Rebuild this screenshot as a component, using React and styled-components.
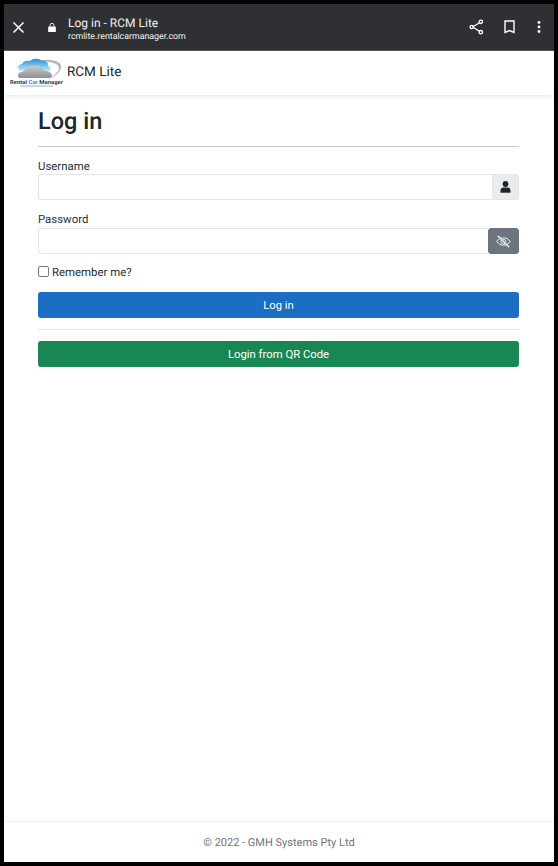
import React from 'react';
import styled, { createGlobalStyle } from 'styled-components';

const GlobalStyle = createGlobalStyle`
  html, body { margin: 0; padding: 0; background: #000; }
  * { box-sizing: border-box; }
  body {
    font-family: Roboto, "Liberation Sans", sans-serif;
    text-rendering: geometricPrecision;
  }
`;

const Frame = styled.div`
  width: 558px;
  height: 866px;
  background: #000;
  padding: 4px;
`;

const Screen = styled.div`
  height: 858px;
  background: #fff;
  display: flex;
  flex-direction: column;
`;

const BrowserBar = styled.div`
  height: 47px;
  flex: none;
  background: #2f3033;
  border-bottom: 1px solid #55565a;
  display: flex;
  align-items: center;
  color: #fff;
`;

const CloseSlot = styled.div`
  width: 29px;
  padding-left: 8px;
  display: flex;
`;

const LockSlot = styled.div`
  width: 35px;
  padding-left: 15px;
  display: flex;
`;

const TitleBlock = styled.div`
  flex: 1;
  display: flex;
  flex-direction: column;
  padding-top: 3px;
`;

const PageTitle = styled.div`
  font-size: 12px;
  line-height: 16px;
  color: #f1f1f2;
`;

const PageUrl = styled.div`
  font-size: 8.8px;
  line-height: 12px;
  color: #f4f4f5;
`;

const BarActions = styled.div`
  display: flex;
  align-items: center;
  gap: 20px;
  padding-right: 11px;
`;

const NavBar = styled.nav`
  height: 44px;
  flex: none;
  background: #fff;
  box-shadow: 0 1px 4px rgba(0, 0, 0, 0.1);
  display: flex;
  align-items: center;
  padding: 0 0 2px 6px;
  gap: 3px;
`;

const Brand = styled.div`
  font-size: 13.5px;
  color: #212529;
`;

const Main = styled.main`
  flex: 1;
  padding: 0 35px 0 34px;
`;

const Heading = styled.h1`
  margin: 11px 0 0;
  font-size: 23.5px;
  line-height: 30px;
  font-weight: 500;
  color: #212529;
`;

const Rule = styled.hr`
  margin: ${p => p.$gap || '10px 0 12px'};
  border: 0;
  border-top: 1px solid ${p => p.$color || '#c9cacc'};
`;

const Field = styled.div`
  margin-bottom: ${p => p.$gap || '9px'};
`;

const Label = styled.label`
  display: block;
  font-size: 11.4px;
  line-height: ${p => p.$tall ? '17px' : '15px'};
  color: #2b3035;
`;

const InputGroup = styled.div`
  display: flex;
  height: 26px;
`;

const Input = styled.input`
  flex: 1;
  min-width: 0;
  height: 100%;
  border: 1px solid #e3e5e8;
  border-right: 0;
  border-radius: 3px 0 0 3px;
  background: #fff;
  outline: none;
`;

const Addon = styled.div`
  width: ${p => p.$wide ? '31px' : '27px'};
  flex: none;
  display: flex;
  align-items: center;
  justify-content: center;
  background: ${p => p.$dark ? '#6c757d' : '#e9ecef'};
  border-radius: ${p => p.$dark ? '3px' : '0 3px 3px 0'};
  border: 1px solid ${p => p.$dark ? '#6c757d' : '#e3e5e8'};
`;

const RememberRow = styled.label`
  display: flex;
  align-items: center;
  height: 18px;
  gap: 3px;
  margin: 1px 0 11px;
  font-size: 11.4px;
  color: #2b3035;
`;

const Check = styled.input`
  width: 11px;
  height: 11px;
  margin: 0 0 2px;
  appearance: none;
  background: #fff;
  border: 1px solid #76797c;
  border-radius: 2px;
`;

const Button = styled.button`
  display: block;
  width: 100%;
  height: 26px;
  border: 0;
  border-radius: 3px;
  background: ${p => p.$color};
  color: #fff;
  font-family: inherit;
  font-size: 11.3px;
  padding: 0;
`;

const Footer = styled.footer`
  height: 41px;
  flex: none;
  border-top: 1px solid #eceeef;
  display: flex;
  align-items: center;
  justify-content: center;
  font-size: 11px;
  color: #6c757d;
`;

function CloseIcon() {
  return (
    <svg width="13" height="13" viewBox="0 0 13 13" fill="none" stroke="#fff" strokeWidth="1.5">
      <path d="M1.500 1.500l10 10M11.500 1.500l-10 10" />
    </svg>
  );
}

function LockIcon() {
  return (
    <svg width="8" height="11" viewBox="0 0 9 11">
      <path d="M1 4.500h7a.8.8 0 0 1 .8.8v4.600a.8.8 0 0 1-.8.8H1a.8.8 0 0 1-.8-.8V5.300a.8.8 0 0 1 .8-.8z" fill="#fff" />
      <path d="M2.300 4.800V3a2.200 2.200 0 0 1 4.400 0v1.800" fill="none" stroke="#fff" strokeWidth="1" />
    </svg>
  );
}

function ShareIcon() {
  return (
    <svg width="15" height="16" viewBox="0 0 15 16" fill="none" stroke="#fff" strokeWidth="1.300">
      <path d="M3.500 8l7-4.300M3.500 8l7 4.300" />
      <circle cx="2.800" cy="8" r="1.700" />
      <circle cx="11.800" cy="2.800" r="1.700" />
      <circle cx="11.800" cy="13.200" r="1.700" />
    </svg>
  );
}

function BookmarkIcon() {
  return (
    <svg width="11" height="14" viewBox="0 0 11 14" fill="none" stroke="#fff" strokeWidth="1.400">
      <path d="M1 1h9v11.500l-4.500-2-4.500 2z" />
    </svg>
  );
}

function MoreIcon() {
  return (
    <svg width="8" height="12" viewBox="0 0 8 12" fill="#fff">
      <circle cx="4" cy="1.500" r="1.400" />
      <circle cx="4" cy="6" r="1.400" />
      <circle cx="4" cy="10.500" r="1.400" />
    </svg>
  );
}

function UserIcon() {
  return (
    <svg width="11" height="12" viewBox="0 0 11 12" fill="#212529">
      <circle cx="5.500" cy="3" r="2.900" />
      <path d="M0.500 11.800V9.500c0-1.700 1.300-3 3-3h4c1.700 0 3 1.300 3 3v2.300z" />
    </svg>
  );
}

function EyeOffIcon() {
  return (
    <svg width="15" height="13" viewBox="0 0 15 13" fill="none" stroke="#eef0f1" strokeWidth="1">
      <path d="M0.800 6.500C2.500 4 4.800 2.800 7.500 2.800s5 1.200 6.700 3.700c-1.700 2.500-4 3.700-6.700 3.700S2.500 9 0.800 6.500z" />
      <path d="M5.200 5.300a2.600 2.600 0 0 0 3.800 3.300M9.900 7.400a2.600 2.600 0 0 0-3-3" />
      <path d="M1.800 0.800l11.400 11.400" strokeWidth="1.300" />
    </svg>
  );
}

function Logo() {
  return (
    <svg width="54" height="34" viewBox="0 0 54 34">
      <defs>
        <linearGradient id="cloud" x1="0" y1="0" x2="0" y2="1">
          <stop offset="0" stopColor="#1c93d6" />
          <stop offset="1" stopColor="#c6e8f6" />
        </linearGradient>
        <linearGradient id="car" x1="0" y1="0" x2="0" y2="1">
          <stop offset="0" stopColor="#c9cbcd" />
          <stop offset="1" stopColor="#8d9194" />
        </linearGradient>
      </defs>
      <path d="M5 13C12 7 28 3.500 41 5c7 1 11 3.500 10 8-1 4-5 8-10 10 4-3 8-7 8-10 0-3-4-5-9-6C28 5 14 8 5 13z" fill="#b4b7ba" />
      <path d="M11 16c-4-1-4-6 1-7 1-3 5-4 8-3 3-3 9-3 12 0 4-1 7 2 6 5 3 1 3 4 1 5z" fill="url(#cloud)" />
      <path d="M8 21c0-3 2-4 6-5 2-3 5-5 10-5s8 2 11 5c4 0 7 2 7 5 0 1-1 2-2 2H10c-1 0-2-1-2-2z" fill="url(#car)" />
      <text x="0" y="28.500" fontFamily="Roboto, sans-serif" fontSize="5.500" fontWeight="700" fill="#3a4046" textLength="53" lengthAdjust="spacingAndGlyphs">
        Rental <tspan fill="#1f8fc9">Car</tspan> Manager
      </text>
      <rect x="10" y="30.300" width="33" height="1.400" fill="#9fcfe6" />
    </svg>
  );
}

export default function App() {
  return (
    <Frame>
      <GlobalStyle />
      <Screen>
        <BrowserBar>
          <CloseSlot><CloseIcon /></CloseSlot>
          <LockSlot><LockIcon /></LockSlot>
          <TitleBlock>
            <PageTitle>Log in - RCM Lite</PageTitle>
            <PageUrl>rcmlite.rentalcarmanager.com</PageUrl>
          </TitleBlock>
          <BarActions>
            <ShareIcon />
            <BookmarkIcon />
            <MoreIcon />
          </BarActions>
        </BrowserBar>
        <NavBar>
          <Logo />
          <Brand>RCM Lite</Brand>
        </NavBar>
        <Main>
          <Heading>Log in</Heading>
          <Rule />
          <Field $gap="11px">
            <Label>Username</Label>
            <InputGroup>
              <Input type="text" />
              <Addon><UserIcon /></Addon>
            </InputGroup>
          </Field>
          <Field>
            <Label $tall>Password</Label>
            <InputGroup>
              <Input type="password" />
              <Addon $dark $wide><EyeOffIcon /></Addon>
            </InputGroup>
          </Field>
          <RememberRow>
            <Check type="checkbox" />
            Remember me?
          </RememberRow>
          <Button $color="#1b6ec2">Log in</Button>
          <Rule $gap="11px 0 11px" $color="#e3e4e5" />
          <Button $color="#198754">Login from QR Code</Button>
        </Main>
        <Footer>© 2022 - GMH Systems Pty Ltd</Footer>
      </Screen>
    </Frame>
  );
}
